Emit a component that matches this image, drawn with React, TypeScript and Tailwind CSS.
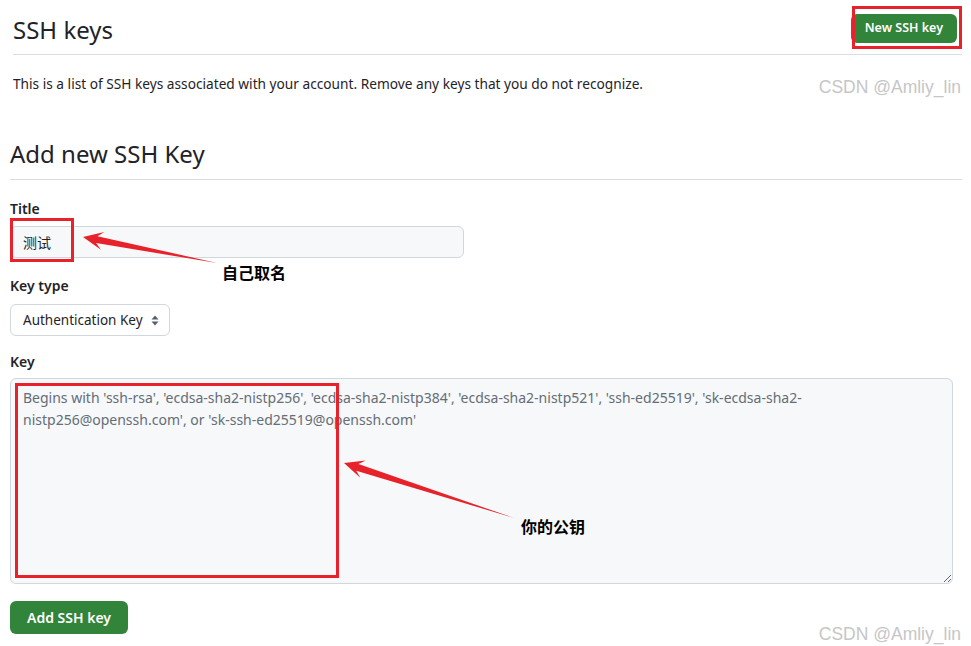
import React from "react";

const font = { fontFamily: '"Noto Sans", "Noto Sans CJK SC", sans-serif' };
const mark = { fontFamily: '"Liberation Sans", sans-serif' };

const Arrow: React.FC<{ x1: number; y1: number; x2: number; y2: number }> = ({ x1, y1, x2, y2 }) => {
  // tapered arrow from (x1,y1) tail to (x2,y2) tip
  const dx = x2 - x1;
  const dy = y2 - y1;
  const len = Math.hypot(dx, dy);
  const ux = dx / len;
  const uy = dy / len;
  const nx = -uy;
  const ny = ux;
  const headLen = 20;
  const headW = 9;
  const shaftW = 3.5;
  const bx = x2 - ux * headLen;
  const by = y2 - uy * headLen;
  const nbx = x2 - ux * (headLen - 6);
  const nby = y2 - uy * (headLen - 6);
  const pts = [
    [x1, y1],
    [nbx + nx * shaftW, nby + ny * shaftW],
    [bx + nx * headW, by + ny * headW],
    [x2, y2],
    [bx - nx * headW, by - ny * headW],
    [nbx - nx * shaftW, nby - ny * shaftW],
  ]
    .map((p) => p.join(","))
    .join(" ");
  return <polygon points={pts} fill="#e8222a" />;
};

export default function App() {
  return (
    <div className="relative w-[971px] h-[646px] bg-white overflow-hidden text-[#1f2328]" style={font}>
      {/* header */}
      <div className="pl-[13px] pr-[9px]">
        <div className="flex items-center justify-between h-[55px] border-b border-[#d8dee4]">
          <h2 className="text-[24px] font-normal leading-none mt-[6px]">SSH keys</h2>
          <button className="h-[29px] px-[14px] rounded-md bg-[#33843b] text-white text-[12.5px] font-semibold mr-[5px] mt-[3px]">
            New SSH key
          </button>
        </div>
        <div className="flex justify-between items-start mt-[19px]">
          <p className="text-[13.7px] leading-5">
            This is a list of SSH keys associated with your account. Remove any keys that you do not recognize.
          </p>
          <span className="text-[17.5px] text-[#c6c6c6] mr-[1px]" style={mark}>
            CSDN @Amliy_lin
          </span>
        </div>
      </div>

      {/* form */}
      <div className="pl-[10px] pr-[9px] mt-[42px]">
        <h2 className="text-[24px] font-normal leading-none pb-[13px] border-b border-[#d8dee4]">Add new SSH Key</h2>

        <label className="block text-[14px] font-semibold mt-[19px] leading-5">Title</label>
        <input
          readOnly
          value="测试"
          className="mt-[7px] w-[454px] h-[32px] px-[12px] rounded-md border border-[#d0d7de] bg-[#f6f8fa] text-[14px] outline-none"
        />

        <label className="block text-[14px] font-semibold mt-[18px] leading-5">Key type</label>
        <div className="mt-[8px] w-[160px] h-[32px] pl-[12px] pr-[10px] rounded-md border border-[#d0d7de] bg-white flex items-center justify-between text-[13.5px]">
          <span>Authentication Key</span>
          <svg width="8" height="11" viewBox="0 0 8 11">
            <path d="M4 0.5 L7.5 4.5 H0.5 Z" fill="#57606a" />
            <path d="M4 10.5 L7.5 6.5 H0.5 Z" fill="#57606a" />
          </svg>
        </div>

        <label className="block text-[14px] font-semibold mt-[16px] leading-5">Key</label>
        <textarea
          readOnly
          placeholder="Begins with 'ssh-rsa', 'ecdsa-sha2-nistp256', 'ecdsa-sha2-nistp384', 'ecdsa-sha2-nistp521', 'ssh-ed25519', 'sk-ecdsa-sha2-nistp256@openssh.com', or 'sk-ssh-ed25519@openssh.com'"
          className="mt-[6px] block w-[943px] h-[206px] px-[12px] py-[8px] rounded-md border border-[#d0d7de] bg-[#f6f8fa] text-[14px] leading-[22px] placeholder:text-[#656d76] outline-none"
        />

        <div className="flex justify-between items-start mt-[17px]">
          <button className="h-[33px] px-[17px] rounded-md bg-[#33843b] text-white text-[14px] font-semibold">
            Add SSH key
          </button>
          <span className="text-[17.5px] text-[#c6c6c6] mt-[20px] mr-[1px]" style={mark}>
            CSDN @Amliy_lin
          </span>
        </div>
      </div>

      {/* annotations */}
      <div className="absolute left-[852px] top-[6px] w-[110px] h-[43px] border-[3px] border-[#e8222a]" />
      <div className="absolute left-[10px] top-[218px] w-[64px] h-[44px] border-[3px] border-[#e8222a]" />
      <div className="absolute left-[15px] top-[383px] w-[324px] h-[195px] border-[3px] border-[#e8222a]" />

      <svg className="absolute left-0 top-0 pointer-events-none" width="971" height="646">
        <Arrow x1={217} y1={263} x2={83} y2={237} />
        <Arrow x1={514} y1={518} x2={344} y2={463} />
      </svg>

      <span className="absolute left-[222px] top-[261px] text-[16px] font-bold text-black">自己取名</span>
      <span className="absolute left-[521px] top-[515px] text-[16px] font-bold text-black">你的公钥</span>
    </div>
  );
}
